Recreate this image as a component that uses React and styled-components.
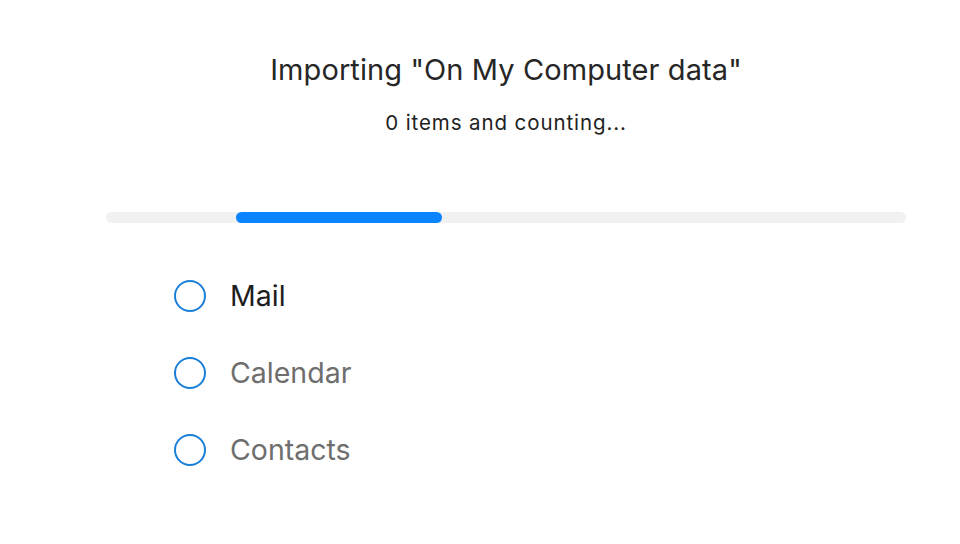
import styled, { createGlobalStyle } from "styled-components";

const GlobalStyle = createGlobalStyle`
  html, body {
    margin: 0;
    padding: 0;
    background: #ffffff;
    font-family: Inter, "Open Sans", "Liberation Sans", sans-serif;
  }
`;

const sources = [
  { name: "Mail", active: true },
  { name: "Calendar", active: false },
  { name: "Contacts", active: false },
];

const App = () => {
  return (
    <Page>
      <GlobalStyle />
      <Panel>
        <Title>Importing "On My Computer data"</Title>
        <Subtitle>0 items and counting...</Subtitle>
        <Track>
          <Fill style={{ left: "16.25%", width: "25.75%" }} />
        </Track>
        <List>
          {sources.map((item) => (
            <Row key={item.name}>
              <Circle />
              <Label $active={item.active}>{item.name}</Label>
            </Row>
          ))}
        </List>
      </Panel>
    </Page>
  );
};

const Page = styled.div`
  width: 960px;
  height: 544px;
  overflow: hidden;
  background: #fff;
`;

const Panel = styled.div`
  width: 800px;
  margin-left: 106px;
  padding-top: 52px;
  display: flex;
  flex-direction: column;
`;

const Title = styled.h1`
  margin: 0;
  text-align: center;
  font-size: 29px;
  font-weight: 400;
  line-height: 36px;
  letter-spacing: 0.1px;
  color: #262626;
`;

const Subtitle = styled.p`
  margin: 23px 0 0;
  text-align: center;
  font-size: 20.5px;
  font-weight: 400;
  line-height: 24px;
  letter-spacing: 0.9px;
  color: #222;
`;

const Track = styled.div`
  position: relative;
  margin-top: 77px;
  height: 11px;
  border-radius: 6px;
  background: #f1f1f1;
`;

const Fill = styled.div`
  position: absolute;
  top: 0;
  bottom: 0;
  border-radius: 6px;
  background: #0a84ff;
`;

const List = styled.ul`
  list-style: none;
  margin: 57px 0 0;
  padding: 0 0 0 68px;
  display: flex;
  flex-direction: column;
  gap: 45px;
`;

const Row = styled.li`
  display: flex;
  align-items: center;
  gap: 24px;
  height: 32px;
`;

const Circle = styled.span`
  box-sizing: border-box;
  width: 32px;
  height: 32px;
  border-radius: 50%;
  border: 2px solid #1a7fd9;
`;

const Label = styled.span`
  font-size: 28.5px;
  line-height: 32px;
  color: ${(p) => (p.$active ? "#1d1d1d" : "#6e6e6e")};
`;

export default App;
